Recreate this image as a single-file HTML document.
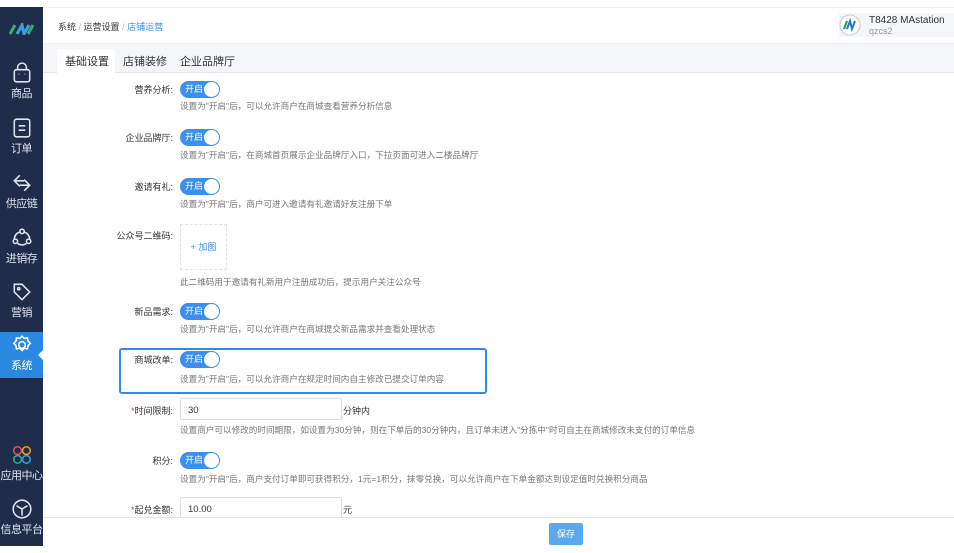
<!DOCTYPE html>
<html><head><meta charset="utf-8"><style>
*{margin:0;padding:0;box-sizing:border-box}
body{width:954px;height:553px;overflow:hidden;background:#fff;font-family:"Liberation Sans","Noto Sans CJK SC",sans-serif;position:relative;color:#333}
.sb{position:absolute;left:0;top:7px;width:43px;height:539px;background:#1f2d4b}
.it{position:absolute;left:-5px;width:53px;text-align:center;color:#dfe4ee;font-size:11px;white-space:nowrap;letter-spacing:-0.5px}
.it svg{display:block;margin:0 auto 1px}
.act{background:#2b88e0;color:#fff;left:0;width:43px}
.hdr{position:absolute;left:43px;top:7px;right:0;height:37px;background:#fff;border-top:1px solid #eee;border-bottom:1px solid #eee}
.tabs{position:absolute;left:43px;top:44px;right:0;height:29px;background:#f4f6f9;border-bottom:1px solid #e8e8e8}
.tab{position:absolute;top:9px;font-size:11px;color:#333}
.lab{position:absolute;right:calc(954px - 173px);font-size:9px;color:#333;white-space:nowrap}
.lab b{color:#e33;font-weight:normal}
.tg{position:absolute;left:180px;width:40px;height:17px;border-radius:9px;background:#3b8ff0;color:#fff;font-size:9px;line-height:17px;padding-left:5px}
.tg:after{content:"";position:absolute;right:1px;top:1px;width:15px;height:15px;border-radius:50%;background:#fff}
.d{position:absolute;left:180px;font-size:8.6px;color:#777;white-space:nowrap}
.inp{position:absolute;left:180px;width:162px;height:22px;border:1px solid #ddd;border-radius:2px;font-size:9.5px;padding:6px 7px;color:#333}
.foot{position:absolute;left:43px;right:0;top:517px;height:36px;background:#fff;border-top:1px solid #e6e6e6}
</style></head><body>
<div class="sb">
<svg style="position:absolute;left:9px;top:16px" width="26" height="12" viewBox="0 0 26 12"><path d="M1 11L6 2" stroke="#2bb36a" stroke-width="3"/><path d="M8 11L13 2L15 11L20 2" stroke="#3aa0e0" stroke-width="3" fill="none"/><path d="M19 11L24 2" stroke="#2bb36a" stroke-width="3"/></svg>
</div>
<div class="it" style="top:62px"><svg width="22" height="22" viewBox="0 0 20 20" fill="none" stroke="#dfe4ee" stroke-width="1.4"><rect x="3" y="7" width="14" height="11" rx="2"/><path d="M6 7V5a4 4 0 0 1 8 0v2M7 11h.5M12.5 11h.5"/></svg>商品</div>
<div class="it" style="top:117px"><svg width="22" height="22" viewBox="0 0 20 20" fill="none" stroke="#dfe4ee" stroke-width="1.4"><rect x="3" y="2" width="14" height="16" rx="2"/><path d="M7 8h6M7 12h6"/></svg>订单</div>
<div class="it" style="top:172px"><svg width="22" height="22" viewBox="0 0 20 20" fill="none" stroke="#dfe4ee" stroke-width="1.4"><path d="M8 3L3 8l5 5M3 8h9M12 7l5 5-5 5M17 12H8"/></svg>供应链</div>
<div class="it" style="top:227px"><svg width="22" height="22" viewBox="0 0 20 20" fill="none" stroke="#dfe4ee" stroke-width="1.4"><circle cx="10" cy="4" r="2"/><circle cx="4" cy="13" r="2"/><circle cx="16" cy="13" r="2"/><path d="M8 4.5a7 7 0 0 0-5 6.5M12 4.5a7 7 0 0 1 5 6.5M6 15a7 7 0 0 0 8 0"/></svg>进销存</div>
<div class="it" style="top:281px"><svg width="22" height="22" viewBox="0 0 20 20" fill="none" stroke="#dfe4ee" stroke-width="1.4"><path d="M3 3h7l7 7-7 7-7-7z"/><circle cx="7" cy="7" r="1"/></svg>营销</div>
<div class="it act" style="top:332px;height:46px;padding-top:2px"><svg width="22" height="22" viewBox="0 0 20 20" fill="none" stroke="#fff" stroke-width="1.4"><path d="M10 2l2 2 3-.5.5 3 2 2-2 2-.5 3-3-.5-2 2-2-2-3 .5-.5-3-2-2 2-2 .5-3 3 .5z"/><circle cx="10" cy="10" r="3"/></svg>系统</div>
<div style="position:absolute;left:38px;top:350px;border:5px solid transparent;border-right-color:#fff;border-left:0"></div>
<div class="it" style="top:444px"><svg width="22" height="22" viewBox="0 0 20 20" fill="none" stroke-width="1.4"><circle cx="6" cy="6" r="3.5" stroke="#e46"/><circle cx="14" cy="6" r="3.5" stroke="#f90"/><circle cx="6" cy="14" r="3.5" stroke="#3a8"/><circle cx="14" cy="14" r="3.5" stroke="#39e"/></svg>应用中心</div>
<div class="it" style="top:498px"><svg width="22" height="22" viewBox="0 0 20 20" fill="none" stroke="#dfe4ee" stroke-width="1.4"><circle cx="10" cy="10" r="8"/><path d="M5 7l5 3 5-3M10 10v6"/></svg>信息平台</div>

<div class="hdr">
<div style="position:absolute;left:15px;top:12px;font-size:9px;color:#333">系统 <span style="color:#bbb">/</span> 运营设置 <span style="color:#bbb">/</span> <span style="color:#3b8ff0">店铺运营</span></div>
<div style="position:absolute;left:796px;top:5px;width:115px;height:24px;background:#f4f6f9"></div>
<svg style="position:absolute;left:796px;top:6px" width="22" height="22" viewBox="0 0 22 22"><circle cx="11" cy="11" r="10" fill="#fff" stroke="#bcd" /><path d="M5 15l3-8M8 15l3-8 2 8 3-8" stroke="#1f7bd0" stroke-width="2" fill="none"/><path d="M5 15l3-8" stroke="#2a5" stroke-width="2"/></svg>
<div style="position:absolute;left:826px;top:7px;font-size:10px;color:#333">T8428 MAstation</div>
<div style="position:absolute;left:826px;top:18px;font-size:9px;color:#999">qzcs2</div>
</div>
<div class="tabs">
<div style="position:absolute;left:14px;top:5px;width:58px;height:24px;background:#fff"></div>
<div class="tab" style="left:22px">基础设置</div>
<div class="tab" style="left:80px">店铺装修</div>
<div class="tab" style="left:137px">企业品牌厅</div>
</div>

<div class="lab" style="top:83px">营养分析:</div><div class="tg" style="top:81px">开启</div>
<div class="d" style="top:100px">设置为"开启"后，可以允许商户在商城查看营养分析信息</div>
<div class="lab" style="top:131px">企业品牌厅:</div><div class="tg" style="top:129px">开启</div>
<div class="d" style="top:149px">设置为"开启"后，在商城首页展示企业品牌厅入口，下拉页面可进入二楼品牌厅</div>
<div class="lab" style="top:180px">邀请有礼:</div><div class="tg" style="top:178px">开启</div>
<div class="d" style="top:198px">设置为"开启"后，商户可进入邀请有礼邀请好友注册下单</div>
<div class="lab" style="top:229px">公众号二维码:</div>
<div style="position:absolute;left:180px;top:224px;width:47px;height:46px;border:1px dashed #e3e3e3;color:#3b8ff0;font-size:9px;text-align:center;line-height:44px">+ 加图</div>
<div class="d" style="top:276px">此二维码用于邀请有礼新用户注册成功后，提示用户关注公众号</div>
<div class="lab" style="top:305px">新品需求:</div><div class="tg" style="top:303px">开启</div>
<div class="d" style="top:323px">设置为"开启"后，可以允许商户在商城提交新品需求并查看处理状态</div>
<div style="position:absolute;left:119px;top:348px;width:368px;height:46px;border:2px solid #2d8cf0;border-radius:3px"></div>
<div class="lab" style="top:353px">商城改单:</div><div class="tg" style="top:351px">开启</div>
<div class="d" style="top:373px">设置为"开启"后，可以允许商户在规定时间内自主修改已提交订单内容</div>
<div class="lab" style="top:404px"><b>*</b>时间限制:</div>
<div class="inp" style="top:398px">30</div>
<div style="position:absolute;left:343px;top:404px;font-size:9px">分钟内</div>
<div class="d" style="top:424px">设置商户可以修改的时间期限，如设置为30分钟，则在下单后的30分钟内，且订单未进入"分拣中"时可自主在商城修改未支付的订单信息</div>
<div class="lab" style="top:454px">积分:</div><div class="tg" style="top:452px">开启</div>
<div class="d" style="top:473px">设置为"开启"后，商户支付订单即可获得积分，1元=1积分，抹零兑换，可以允许商户在下单金额达到设定值时兑换积分商品</div>
<div class="lab" style="top:503px"><b>*</b>起兑金额:</div>
<div class="inp" style="top:497px">10.00</div>
<div style="position:absolute;left:343px;top:503px;font-size:9px">元</div>
<div class="foot"><div style="position:absolute;left:506px;top:5px;width:34px;height:22px;background:#5aa8f0;border-radius:2px;color:#fff;font-size:9px;text-align:center;line-height:22px">保存</div></div>
</body></html>
